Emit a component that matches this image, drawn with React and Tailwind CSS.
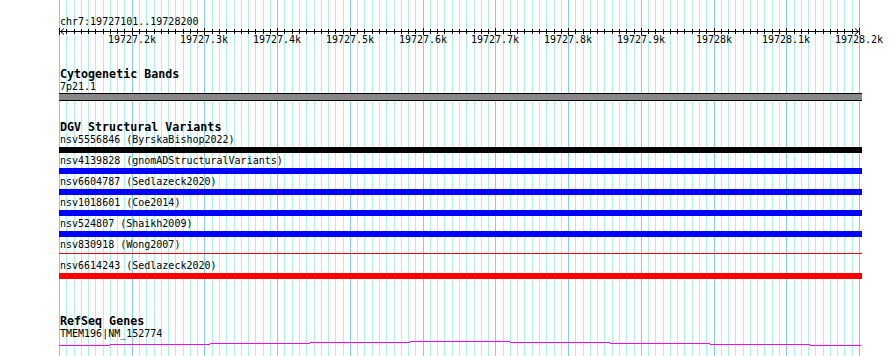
import React from "react";

const GX = Array.from({ length: 111 }, (_, k) => ({
  x: Math.round(59 + (k * 800) / 110) + 0.5,
  major: k % 10 === 0,
  k,
}));

const LABELS = [
  "19727.2k",
  "19727.3k",
  "19727.4k",
  "19727.5k",
  "19727.6k",
  "19727.7k",
  "19727.8k",
  "19727.9k",
  "19728k",
  "19728.1k",
  "19728.2k",
];

function Grid() {
  return (
    <svg
      className="absolute inset-0"
      width="890"
      height="356"
      viewBox="0 0 890 356"
    >
      {GX.filter((g) => !g.major).map((g) => (
        <line key={g.k} x1={g.x} y1="0" x2={g.x} y2="356" stroke="#afeeee" strokeWidth="1" />
      ))}
      {GX.filter((g) => g.major).map((g) => (
        <line key={g.k} x1={g.x} y1="0" x2={g.x} y2="356" stroke="#87cbea" strokeWidth="1" />
      ))}
    </svg>
  );
}

function Ruler() {
  return (
    <svg width="890" height="18" viewBox="0 0 890 18" className="block">
      <line x1="60" y1="3.5" x2="859" y2="3.5" stroke="#000" strokeWidth="1" />
      <polyline points="64,0.5 60.5,3.5 64,6.5" fill="none" stroke="#000" strokeWidth="1" />
      <polyline points="855,0.5 858.5,3.5 855,6.5" fill="none" stroke="#000" strokeWidth="1" />
      {GX.map((g) =>
        g.major ? (
          <line key={g.k} x1={g.x} y1="0" x2={g.x} y2="7" stroke="#000" strokeWidth="1" />
        ) : (
          <line key={g.k} x1={g.x} y1="1" x2={g.x} y2="6" stroke="#000" strokeWidth="1" />
        )
      )}
      {LABELS.map((t, i) => (
        <text
          key={t}
          x={GX[(i + 1) * 10].x - 0.5}
          y="15"
          textAnchor="middle"
          fontSize="10"
          fontFamily="'DejaVu Sans Mono', monospace"
          fill="#000"
        >
          {t}
        </text>
      ))}
    </svg>
  );
}

function Title({ children }) {
  return (
    <div className="pl-[60px] h-[11px] text-[11.67px] leading-[11px] font-bold whitespace-nowrap">
      {children}
    </div>
  );
}

function Label({ children }) {
  return (
    <div className="pl-[60px] h-[13px] text-[10px] leading-[13px] whitespace-nowrap">
      {children}
    </div>
  );
}

const ROWS = [
  { label: "nsv5556846 (ByrskaBishop2022)", kind: "black" },
  { label: "nsv4139828 (gnomADStructuralVariants)", kind: "blue" },
  { label: "nsv6604787 (Sedlazeck2020)", kind: "blue" },
  { label: "nsv1018601 (Coe2014)", kind: "blue" },
  { label: "nsv524807 (Shaikh2009)", kind: "blue" },
  { label: "nsv830918 (Wong2007)", kind: "thin" },
  { label: "nsv6614243 (Sedlazeck2020)", kind: "red" },
];

function Feature({ kind }) {
  if (kind === "thin") {
    return (
      <div className="ml-[59px] w-[803px] h-[6px] mt-[1px] mb-[1px] pt-[1px]">
        <div className="w-[803px] h-[1px] bg-[#ff0000]" />
      </div>
    );
  }
  const cls =
    kind === "black"
      ? "bg-black"
      : kind === "blue"
      ? "bg-[#0000ff]"
      : "bg-[#ff0000]";
  return <div className={`ml-[59px] w-[803px] h-[6px] mt-[1px] mb-[1px] ${cls}`} />;
}

function GeneLine() {
  const segs = [
    [59, 110, 345],
    [110, 210, 344],
    [210, 310, 343],
    [310, 410, 342],
    [410, 510, 341],
    [510, 610, 342],
    [610, 710, 343],
    [710, 810, 344],
    [810, 861, 345],
  ];
  return (
    <svg width="890" height="10" viewBox="0 340 890 10" className="block">
      {segs.map(([a, b, y]) => (
        <rect key={a} x={a} y={y} width={b - a} height="1" fill="#ff00ff" />
      ))}
    </svg>
  );
}

export default function App() {
  return (
    <div className="relative w-[890px] h-[356px] bg-white overflow-hidden font-['DejaVu_Sans_Mono',monospace] text-black">
      <Grid />
      <div className="relative flex flex-col">
        <div className="h-[15px]" />
        <Label>chr7:19727101..19728200</Label>
        <Ruler />
        <div className="h-[23px]" />
        <Title>Cytogenetic Bands</Title>
        <Label>7p21.1</Label>
        <div className="ml-[59px] w-[803px] h-[8px] bg-[#888888] border-y border-black" />
        <div className="h-[21px]" />
        <Title>DGV Structural Variants</Title>
        {ROWS.map((r) => (
          <div key={r.label} className="flex flex-col">
            <Label>{r.label}</Label>
            <Feature kind={r.kind} />
          </div>
        ))}
        <div className="h-[36px]" />
        <Title>RefSeq Genes</Title>
        <Label>TMEM196|NM_152774</Label>
        <GeneLine />
      </div>
    </div>
  );
}
